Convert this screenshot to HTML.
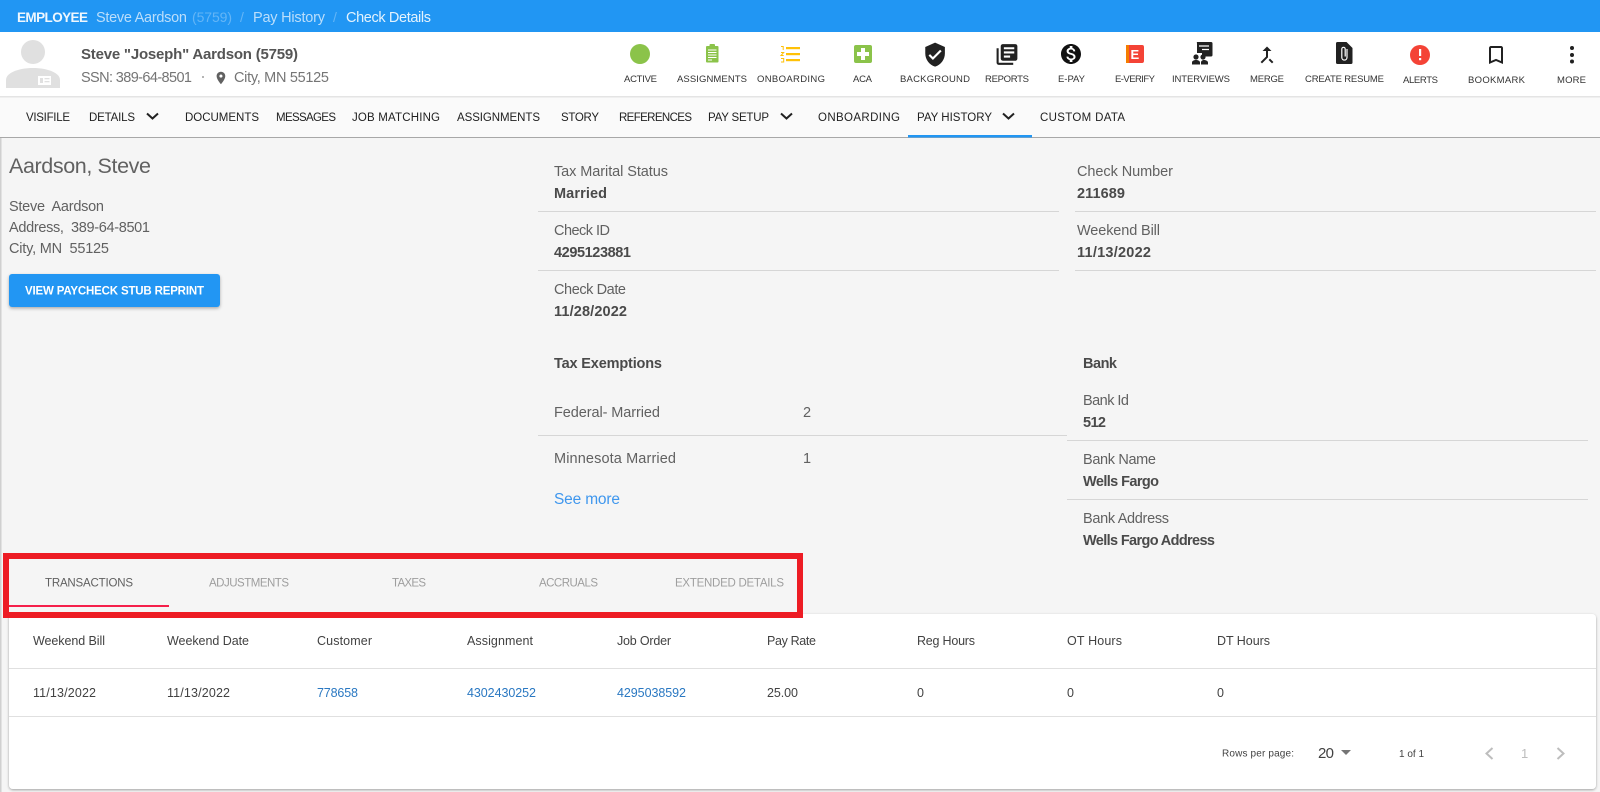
<!DOCTYPE html>
<html lang="en">
<head>
<meta charset="utf-8">
<title>Check Details</title>
<style>
html,body{margin:0;padding:0;width:1600px;height:792px;overflow:hidden;background:#f5f5f5}
svg{display:block}
text{font-family:"Liberation Sans",Arial,sans-serif;white-space:pre}
.nav{font-size:11.5px;fill:#212121}
.ic{font-size:9.5px;fill:#333}
.lb{font-size:14.5px;fill:#616161}
.vl{font-size:14.5px;font-weight:bold;fill:#4a4a4a}
.tb{font-size:11.5px;fill:#9e9e9e}
.th{font-size:12.5px;fill:#424242}
.lk{font-size:12.5px;fill:#2a78c2}
</style>
</head>
<body>
<svg width="1600" height="792" viewBox="0 0 1600 792" xmlns="http://www.w3.org/2000/svg">
<defs>
<filter id="sh" x="-5%" y="-20%" width="110%" height="150%"><feDropShadow dx="0" dy="1.5" stdDeviation="1.5" flood-color="#000" flood-opacity=".3"/></filter>
<filter id="sc" x="-2%" y="-5%" width="104%" height="110%"><feDropShadow dx="0" dy="1" stdDeviation="1.2" flood-color="#000" flood-opacity=".35"/></filter>
</defs>
<rect width="1600" height="792" fill="#f5f5f5"/>
<rect x="0" y="137" width="1.5" height="655" fill="#d0d0d0"/>

<!-- top bar -->
<rect width="1600" height="32" fill="#2196f3"/>
<text x="17" y="22" font-size="13.5" font-weight="bold" fill="#eef7fe" textLength="71">EMPLOYEE</text>
<text x="96" y="22" font-size="14.500" fill="#bbdefb" textLength="91">Steve Aardson</text>
<text x="192" y="22" font-size="14" fill="#64b5f6" textLength="40">(5759)</text>
<text x="240" y="22" font-size="14" fill="#64b5f6">/</text>
<text x="253" y="22" font-size="14.500" fill="#bbdefb" textLength="72">Pay History</text>
<text x="333" y="22" font-size="14" fill="#64b5f6">/</text>
<text x="346" y="22" font-size="14.500" fill="#e3f2fd" textLength="85">Check Details</text>

<!-- header -->
<rect y="32" width="1600" height="64" fill="#fff"/>
<rect y="96" width="1600" height="1.5" fill="#e4e4e4"/>
<circle cx="33" cy="52" r="12" fill="#e0e0e0"/>
<path d="M6 88V80C6 73 18 68 33 68S60 73 60 80V88Z" fill="#e0e0e0"/>
<rect x="38" y="76" width="13" height="9" fill="#fff"/>
<rect x="40" y="78" width="3" height="5" fill="#e0e0e0"/><rect x="44.500" y="78" width="5" height="1.300" fill="#e0e0e0"/><rect x="44.500" y="81" width="5" height="1.300" fill="#e0e0e0"/>
<text x="81" y="59" font-size="15" font-weight="bold" fill="#555" textLength="217">Steve "Joseph" Aardson (5759)</text>
<text x="81" y="82" font-size="14.500" fill="#757575" textLength="111">SSN: 389-64-8501</text>
<circle cx="203" cy="77" r="1" fill="#9e9e9e"/>
<path transform="translate(213.500,70.500) scale(.62)" d="M12 2C8.130 2 5 5.130 5 9c0 5.250 7 13 7 13s7-7.750 7-13c0-3.870-3.130-7-7-7zm0 9.500c-1.380 0-2.500-1.120-2.500-2.500s1.120-2.500 2.500-2.500 2.500 1.120 2.500 2.500-1.120 2.500-2.500 2.500z" fill="#616161"/>
<text x="234" y="82" font-size="14.500" fill="#757575" textLength="95">City, MN 55125</text>

<!-- toolbar icons -->
<circle cx="640" cy="54" r="10" fill="#8bc34a"/>
<g fill="#8bc34a"><rect x="706" y="46" width="12.500" height="16.500" rx="1"/><rect x="709.500" y="44" width="5.500" height="3.500" rx="1"/></g>
<g stroke="#fff" stroke-width=".9"><path d="M708 50h8.500M708 52.500h8.500M708 55h8.500M708 57.500h8.500M708 60h4"/></g>
<g fill="#ffc107"><rect x="786" y="47" width="14" height="2.200"/><rect x="786" y="53" width="14" height="2.200"/><rect x="786" y="59" width="14" height="2.200"/></g>
<g fill="none" stroke="#ffc107" stroke-width="1"><path d="M781 46.500h2.200v3.500M781 52.500h2.700l-2.700 3h2.700M781 58.500h2.700v3.500H781"/></g>
<rect x="854" y="45" width="18" height="18" rx="2" fill="#8bc34a"/>
<path d="M861 48h4v4h4v4h-4v4h-4v-4h-4v-4h4z" fill="#fff"/>
<path transform="translate(922,41.500) scale(1.090)" d="M12 1L3 5v6c0 5.550 3.840 10.740 9 12 5.160-1.260 9-6.450 9-12V5l-9-4zm-2 16l-4-4 1.410-1.410L10 14.170l6.590-6.590L18 9l-8 8z" fill="#212121"/>
<path transform="translate(994.500,42) scale(1.040)" d="M4 6H2v14c0 1.100.9 2 2 2h14v-2H4V6zm16-4H8c-1.100 0-2 .9-2 2v12c0 1.100.9 2 2 2h12c1.100 0 2-.9 2-2V4c0-1.100-.9-2-2-2zm-1 9H9V9h10v2zm-4 4H9v-2h6v2zm4-8H9V5h10v2z" fill="#212121"/>
<path transform="translate(1059,42) scale(1)" d="M12 2C6.480 2 2 6.480 2 12s4.480 10 10 10 10-4.480 10-10S17.520 2 12 2zm1.410 16.090V20h-2.670v-1.930c-1.710-.36-3.160-1.460-3.270-3.400h1.960c.1 1.050.82 1.870 2.650 1.870 1.960 0 2.400-.98 2.400-1.590 0-.83-.44-1.610-2.670-2.140-2.480-.6-4.180-1.620-4.180-3.670 0-1.720 1.390-2.840 3.110-3.210V4h2.670v1.950c1.860.45 2.790 1.860 2.850 3.390H14.300c-.05-1.110-.64-1.870-2.220-1.870-1.500 0-2.400.68-2.400 1.640 0 .84.65 1.390 2.670 1.910s4.180 1.390 4.180 3.910c-.01 1.830-1.380 2.830-3.120 3.160z" fill="#111"/>
<rect x="1126" y="45" width="18" height="18" rx="2" fill="#f44336"/>
<rect x="1126" y="45" width="3" height="18" fill="#f57c00"/>
<text x="1130.500" y="59" font-size="13" font-weight="bold" fill="#fff">E</text>
<path d="M1197 42h14a1.500 1.500 0 0 1 1.500 1.500V55a1.500 1.500 0 0 1-1.500 1.500h-6l-3 3V53h-5V43.500A1.500 1.500 0 0 1 1197 42z" fill="#212121"/>
<path d="M1199 46h10M1202 49.500h7" stroke="#fff" stroke-width="1.300"/>
<g fill="#212121"><circle cx="1196" cy="57" r="2.600"/><circle cx="1203" cy="57" r="2.600"/><path d="M1192 64.500v-2c0-1.600 2-2.500 4-2.500s4 .9 4 2.500v2zM1201 64.500v-2c0-1.600 1.500-2.500 3-2.500s4 .9 4 2.500v2z"/></g>
<path transform="translate(1255,43) scale(1)" d="M17 20.410L18.410 19 15 15.590 13.590 17 17 20.410zM7.500 8H11v5.590L5.590 19 7 20.410l6-6V8h3.500L12 3.500 7.500 8z" fill="#212121"/>
<path d="M1337.500 42h9l6 6v14.500a1.500 1.500 0 0 1-1.500 1.500h-13.500a1.500 1.500 0 0 1-1.500-1.500v-19a1.500 1.500 0 0 1 1.500-1.500z" fill="#212121"/>
<path d="M1347 49v8.500a2.600 2.600 0 0 1-5.200 0V49a1.700 1.700 0 0 1 3.400 0v7.500" fill="none" stroke="#fff" stroke-width="1.200"/>
<circle cx="1420" cy="55" r="10" fill="#f44336"/>
<rect x="1419" y="49" width="2.200" height="7" fill="#fff"/><rect x="1419" y="58" width="2.200" height="2.200" fill="#fff"/>
<path transform="translate(1484,43) scale(1)" d="M17 3H7c-1.100 0-2 .9-2 2v16l7-3 7 3V5c0-1.100-.9-2-2-2zm0 15l-5-2.180L7 18V5h10v13z" fill="#212121"/>
<g fill="#212121"><circle cx="1572" cy="48" r="2"/><circle cx="1572" cy="55" r="2"/><circle cx="1572" cy="61.500" r="2"/></g>

<text class="ic" x="624" y="82" textLength="33">ACTIVE</text>
<text class="ic" x="677" y="82" textLength="70">ASSIGNMENTS</text>
<text class="ic" x="757" y="82" textLength="68">ONBOARDING</text>
<text class="ic" x="853" y="82" textLength="19">ACA</text>
<text class="ic" x="900" y="82" textLength="70">BACKGROUND</text>
<text class="ic" x="985" y="82" textLength="44">REPORTS</text>
<text class="ic" x="1058" y="82" textLength="27">E-PAY</text>
<text class="ic" x="1115" y="82" textLength="40">E-VERIFY</text>
<text class="ic" x="1172" y="82" textLength="58">INTERVIEWS</text>
<text class="ic" x="1250" y="82" textLength="34">MERGE</text>
<text class="ic" x="1305" y="82" textLength="79">CREATE RESUME</text>
<text class="ic" x="1403" y="83" textLength="35">ALERTS</text>
<text class="ic" x="1468" y="83" textLength="57">BOOKMARK</text>
<text class="ic" x="1557" y="83" textLength="29">MORE</text>

<!-- nav -->
<rect y="97.500" width="1600" height="39.500" fill="#fafafa"/>
<rect y="137" width="1600" height="1" fill="#a8a8a8"/>
<rect x="908" y="135" width="124" height="2.500" fill="#2196f3"/>
<text class="nav" x="26" y="121" textLength="44">VISIFILE</text>
<text class="nav" x="89" y="121" textLength="46">DETAILS</text>
<path d="M147 113.500l5.500 5 5.500-5" fill="none" stroke="#212121" stroke-width="2"/>
<text class="nav" x="185" y="121" textLength="74">DOCUMENTS</text>
<text class="nav" x="276" y="121" textLength="60">MESSAGES</text>
<text class="nav" x="352" y="121" textLength="88">JOB MATCHING</text>
<text class="nav" x="457" y="121" textLength="83">ASSIGNMENTS</text>
<text class="nav" x="561" y="121" textLength="38">STORY</text>
<text class="nav" x="619" y="121" textLength="73">REFERENCES</text>
<text class="nav" x="708" y="121" textLength="61">PAY SETUP</text>
<path d="M781 113.500l5.500 5 5.500-5" fill="none" stroke="#212121" stroke-width="2"/>
<text class="nav" x="818" y="121" textLength="82">ONBOARDING</text>
<text class="nav" x="917" y="121" textLength="75">PAY HISTORY</text>
<path d="M1003 113.500l5.500 5 5.500-5" fill="none" stroke="#212121" stroke-width="2"/>
<text class="nav" x="1040" y="121" textLength="85">CUSTOM DATA</text>

<!-- left column -->
<text x="9" y="173" font-size="21.500" fill="#616161" textLength="142">Aardson, Steve</text>
<text class="lb" x="9" y="211" textLength="95">Steve  Aardson</text>
<text class="lb" x="9" y="232" textLength="141">Address,  389-64-8501</text>
<text class="lb" x="9" y="253" textLength="100">City, MN  55125</text>
<rect x="9" y="274" width="211" height="33" rx="3" fill="#2196f3" filter="url(#sh)"/>
<text x="25" y="294.500" font-size="11.5" font-weight="bold" fill="#fff" textLength="179">VIEW PAYCHECK STUB REPRINT</text>

<!-- middle fields -->
<text class="lb" x="554" y="176" textLength="114">Tax Marital Status</text>
<text class="vl" x="554" y="198" textLength="53">Married</text>
<rect x="538" y="211" width="521" height="1" fill="#d6d6d6"/>
<text class="lb" x="554" y="235" textLength="56">Check ID</text>
<text class="vl" x="554" y="257" textLength="77">4295123881</text>
<rect x="538" y="270" width="521" height="1" fill="#d6d6d6"/>
<text class="lb" x="554" y="294" textLength="72">Check Date</text>
<text class="vl" x="554" y="316" textLength="73">11/28/2022</text>

<!-- right fields -->
<text class="lb" x="1077" y="176" textLength="96">Check Number</text>
<text class="vl" x="1077" y="198" textLength="48">211689</text>
<rect x="1075" y="211" width="521" height="1" fill="#d6d6d6"/>
<text class="lb" x="1077" y="235" textLength="83">Weekend Bill</text>
<text class="vl" x="1077" y="257" textLength="74">11/13/2022</text>
<rect x="1075" y="270" width="521" height="1" fill="#d6d6d6"/>

<!-- tax exemptions -->
<text class="vl" x="554" y="368" textLength="108">Tax Exemptions</text>
<text class="lb" x="554" y="417" textLength="106">Federal- Married</text>
<text class="lb" x="803" y="417">2</text>
<rect x="538" y="435" width="529" height="1" fill="#d6d6d6"/>
<text class="lb" x="554" y="463" textLength="122">Minnesota Married</text>
<text class="lb" x="803" y="463">1</text>
<text x="554" y="504" font-size="15.500" fill="#3f97ee" textLength="66">See more</text>

<!-- bank -->
<text class="vl" x="1083" y="368" textLength="34">Bank</text>
<text class="lb" x="1083" y="405" textLength="46">Bank Id</text>
<text class="vl" x="1083" y="427" textLength="23">512</text>
<rect x="1067" y="440" width="521" height="1" fill="#d6d6d6"/>
<text class="lb" x="1083" y="464" textLength="73">Bank Name</text>
<text class="vl" x="1083" y="486" textLength="76">Wells Fargo</text>
<rect x="1067" y="499" width="521" height="1" fill="#d6d6d6"/>
<text class="lb" x="1083" y="523" textLength="86">Bank Address</text>
<text class="vl" x="1083" y="545" textLength="132">Wells Fargo Address</text>

<!-- table card -->
<rect x="9" y="614" width="1587" height="175" rx="4" fill="#fff" filter="url(#sc)"/>

<!-- tabs + annotation -->
<rect x="6" y="556" width="794" height="59" fill="#f5f5f5" stroke="#ed1c24" stroke-width="6"/>
<text x="45" y="586.500" font-size="11.500" fill="#616161" textLength="88">TRANSACTIONS</text>
<text class="tb" x="209" y="586.500" textLength="80">ADJUSTMENTS</text>
<text class="tb" x="392" y="586.500" textLength="34">TAXES</text>
<text class="tb" x="539" y="586.500" textLength="59">ACCRUALS</text>
<text class="tb" x="675" y="586.500" textLength="109">EXTENDED DETAILS</text>
<rect x="9" y="605" width="160" height="2" fill="#f5204a"/>

<!-- table -->
<text class="th" x="33" y="645" textLength="72">Weekend Bill</text>
<text class="th" x="167" y="645" textLength="82">Weekend Date</text>
<text class="th" x="317" y="645" textLength="55">Customer</text>
<text class="th" x="467" y="645" textLength="66">Assignment</text>
<text class="th" x="617" y="645" textLength="54">Job Order</text>
<text class="th" x="767" y="645" textLength="49">Pay Rate</text>
<text class="th" x="917" y="645" textLength="58">Reg Hours</text>
<text class="th" x="1067" y="645" textLength="55">OT Hours</text>
<text class="th" x="1217" y="645" textLength="53">DT Hours</text>
<rect x="9" y="668" width="1587" height="1" fill="#e0e0e0"/>
<text class="th" x="33" y="697" textLength="63">11/13/2022</text>
<text class="th" x="167" y="697" textLength="63">11/13/2022</text>
<text class="lk" x="317" y="697" textLength="41">778658</text>
<text class="lk" x="467" y="697" textLength="69">4302430252</text>
<text class="lk" x="617" y="697" textLength="69">4295038592</text>
<text class="th" x="767" y="697" textLength="31">25.00</text>
<text class="th" x="917" y="697">0</text>
<text class="th" x="1067" y="697">0</text>
<text class="th" x="1217" y="697">0</text>
<rect x="9" y="716" width="1587" height="1" fill="#e0e0e0"/>

<!-- pagination -->
<text x="1222" y="756.500" font-size="10" fill="#424242" textLength="72">Rows per page:</text>
<text x="1318" y="758" font-size="15" fill="#424242" textLength="16">20</text>
<path d="M1341 750h10l-5 5z" fill="#757575"/>
<text x="1399" y="757" font-size="10" fill="#424242" textLength="25">1 of 1</text>
<path d="M1492.500 748l-6 5.500 6 5.500" fill="none" stroke="#bdbdbd" stroke-width="2"/>
<text x="1521" y="758" font-size="13" fill="#bdbdbd">1</text>
<path d="M1557.500 748l6 5.500-6 5.500" fill="none" stroke="#bdbdbd" stroke-width="2"/>
</svg>
</body>
</html>
